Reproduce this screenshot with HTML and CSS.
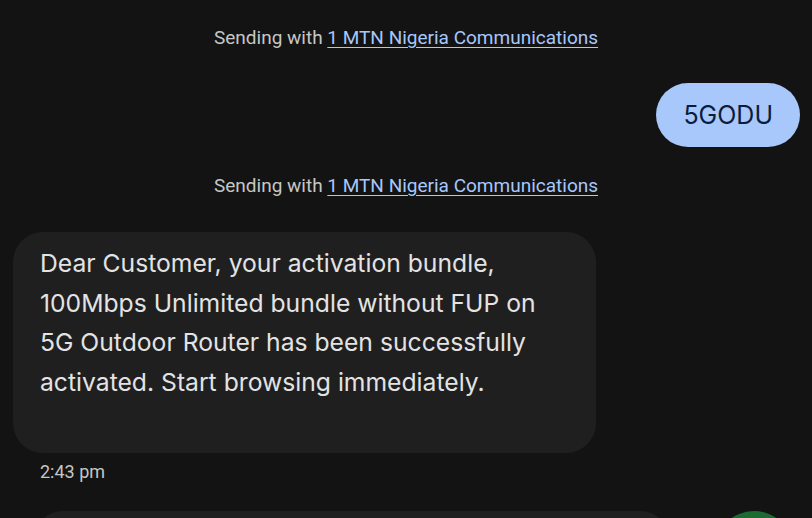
FILE: index.html
```html
<!DOCTYPE html>
<html lang="en">
<head>
    <meta charset="UTF-8">
    <meta name="viewport" content="width=device-width, initial-scale=1.0">
    <title>Messages</title>
    <link rel="stylesheet" href="styles.css">
</head>
<body>
    <div class="thread">
        <p class="sim-note">Sending with <a class="sim-link" href="#">1 MTN Nigeria Communications</a></p>

        <div class="msg-row outgoing">
            <div class="bubble-out">5GODU</div>
        </div>

        <p class="sim-note second">Sending with <a class="sim-link" href="#">1 MTN Nigeria Communications</a></p>

        <div class="msg-row incoming">
            <div class="bubble-in">
                Dear Customer, your activation bundle,<br>
                100Mbps Unlimited bundle without FUP on<br>
                5G Outdoor Router has been successfully<br>
                activated. Start browsing immediately.
            </div>
        </div>
        <p class="msg-time">2:43 pm</p>

        <!-- compose bar, cut off at the bottom of the screen -->
        <div class="composer">
            <div class="compose-box"></div>
            <div class="send-btn"></div>
        </div>
    </div>
</body>
</html>
```

FILE: styles.css
```css
html, body{
    margin: 0;
    height: 518px;
    overflow: hidden;
}

body{
    background-color: #131313;
    color: #e3e3e3;
    font-family: Roboto, "Noto Sans", sans-serif;
}

.thread{
    display: flex;
    flex-direction: column;
    padding-top: 26px;
}

.sim-note{
    margin: 0;
    text-align: center;
    font-size: 19px;
    line-height: 24px;
    color: #c4c7c5;
}
.sim-note.second{
    margin-top: 27px;
}

.sim-link{
    color: #a8c7fa;
    text-decoration: underline;
    text-underline-offset: 3px;
}

.msg-row{
    display: flex;
}
.outgoing{
    justify-content: flex-end;
    padding-right: 12px;
    margin-top: 33px;
}
.incoming{
    padding-left: 13px;
    margin-top: 34px;
}

.bubble-out{
    height: 64px;
    padding: 0 27px;
    border-radius: 32px;
    background-color: #a8c7fa;
    color: #0b1d3e;
    font-family: Inter, Roboto, sans-serif;
    font-size: 25px;
    display: flex;
    align-items: center;
}

.bubble-in{
    width: 556px;
    padding: 12px 0 51px 27px;
    border-radius: 30px;
    background-color: #1f1f20;
    font-family: Inter, Roboto, sans-serif;
    font-size: 24.7px;
    line-height: 39.5px;
}

.msg-time{
    margin: 8px 0 0 40px;
    font-size: 18px;
    line-height: 22px;
    color: #c4c7c5;
}

.composer{
    display: flex;
    align-items: flex-start;
    gap: 45px;
    margin-top: 28px;
    padding-left: 33px;
}
.compose-box{
    width: 637px;
    height: 60px;
    border-radius: 30px;
    background-color: #1f1f20;
}
.send-btn{
    width: 78px;
    height: 78px;
    border-radius: 50%;
    background-color: #1c6b33;
}
```
